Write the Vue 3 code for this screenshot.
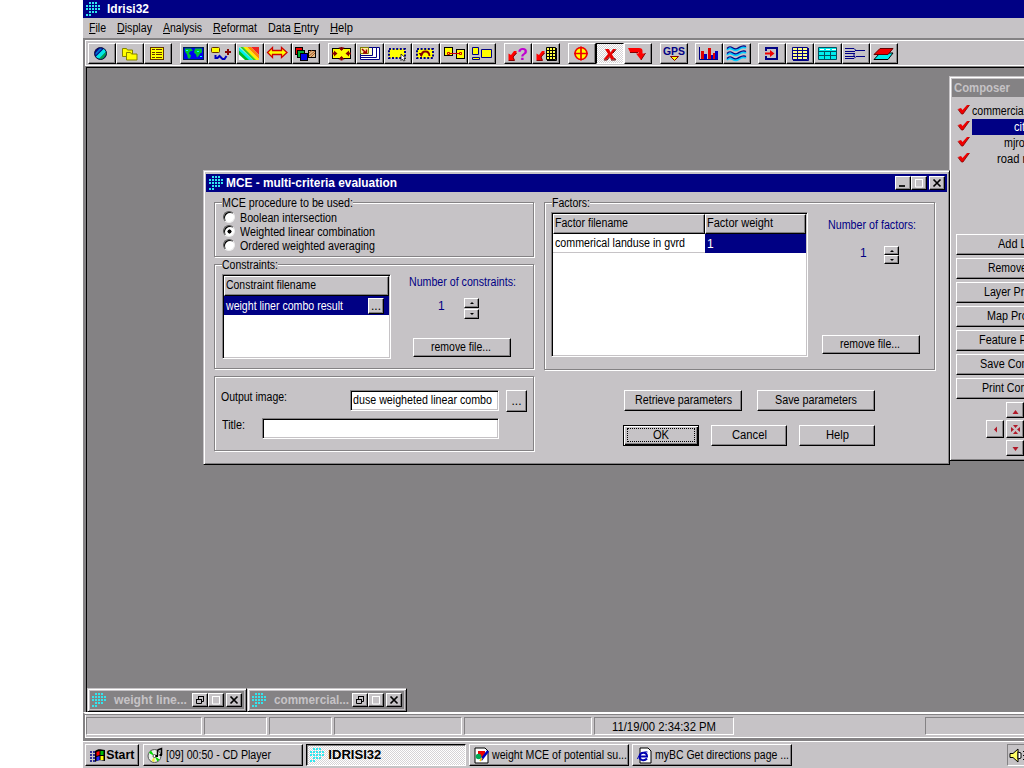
<script setup>
import { ref } from 'vue'

// narrows the letters so a label takes the width the old 8pt bitmap font gives it
const vFit = {
    mounted(el, binding){
        const natural = el.getBoundingClientRect().width;
        el.style.width = binding.value + 'px';
        el.style.transform = 'scaleX(' + binding.value / natural + ')';
    }
}

const menus = [
    { before: '', key: 'F', after: 'ile', width: 17 },
    { before: '', key: 'D', after: 'isplay', width: 35 },
    { before: '', key: 'A', after: 'nalysis', width: 39 },
    { before: '', key: 'R', after: 'eformat', width: 44 },
    { before: 'Data ', key: 'E', after: 'ntry', width: 51 },
    { before: '', key: 'H', after: 'elp', width: 23 },
]

const redArrow = '<path d="M10 7h2.500v2.500L9 13l1.500 3H4.500V9.500L7 11z" fill="#f00"/><path d="M12.500 9L9 13l1.500 3.500H4.500" fill="none" stroke="#840000"/>'
const dashes = '<rect x="5" y="5" width="16" height="9" fill="#ff0" stroke="#000084" stroke-width="2" stroke-dasharray="2 1.6"/>'

// drawn in button coordinates, 28 x 20
const toolGroups = [
    [
        { svg: '<circle cx="12.5" cy="9.5" r="6" fill="#000084"/><path d="M7.500 13l8.500-8.500 2.500 3-7 7.500z" fill="#00e7e7"/><path d="M10.500 15.300l8-8v3l-4 5z" fill="#00a050"/><path d="M7.500 9l4-4.500h3l-7 7z" fill="#0070d0"/><circle cx="12.500" cy="9.500" r="6" fill="none" stroke="#101040"/>' },
        { svg: '<path d="M6.500 4.500h4l1 1.500h5v6.500H6.500z" fill="#ff0" stroke="#848200"/><path d="M10.500 8.500h4l1 1.500h5.500v6H10.500z" fill="#ff0" stroke="#848200"/>' },
        { svg: '<rect x="6.500" y="3.500" width="13" height="12" fill="#ff0" stroke="#633000"/><path d="M8 5.500h3m1 0h6M8 8.500h3m1 0h6M8 10.500h3m1 0h6M8 13.500h3m1 0h6" stroke="#633000"/>' },
    ],
    [
        { svg: '<rect x="3.500" y="3.500" width="20" height="12" fill="#0000f0" stroke="#002050"/><path d="M5 4.500h6l2 2-3 1-1 2 2 2-1 3H8l-1-4-2-3zM15 4.500h7v4l-2 1-1 2-2 2-1-3-2-2z" fill="#00c030"/><path d="M6 6h2v1h-2zM17 7h2v1h-2zM20 12h2v1h-2z" fill="#0ff"/>' },
        { svg: '<rect x="3.500" y="3.500" width="8" height="5" rx="1" fill="#ff0" stroke="#633000"/><path d="M20 5v6M17 8h6" stroke="#840000" stroke-width="2"/><path d="M7.500 11v3h2l2-2 3 3h2l2-3" fill="none" stroke="#0000c0" stroke-width="2"/>' },
        { svg: '<rect x="3" y="3" width="20" height="13" fill="#fff"/><path d="M3 5.500l11 10.500h-5l-6-5.500z" fill="#0b2"/><path d="M3 3l14 13h-4L3 6.500z" fill="#0ee"/><path d="M4 3h4l13 13h-4z" fill="#3c3"/><path d="M7 3h4l12 12v1h-3z" fill="#fe0"/><path d="M11 3h4l8 8v4z" fill="#f80"/><path d="M15 3h8v8z" fill="#e22"/>' },
        { svg: '<path d="M3.500 8.500l5-5v3h9v-3l5.500 5-5.500 5v-3h-9v3z" fill="#ff0" stroke="#d00000" stroke-width="1.300"/>' },
        { svg: '<rect x="3.500" y="3.500" width="7" height="7" fill="#e00" stroke="#000"/><rect x="5.500" y="6.500" width="7" height="7" fill="#0a3" stroke="#000"/><rect x="8.500" y="9.500" width="7" height="7" fill="#00e" stroke="#000"/><rect x="16.500" y="6.500" width="7" height="7" fill="#db8" stroke="#000"/><path d="M17 9l3-2.500M17 12l6-5M19 13l4-4" stroke="#a52"/>' },
    ],
    [
        { svg: '<rect x="4.500" y="4.500" width="18" height="10" fill="#ff0" stroke="#000"/><path d="M13.500 7l3-3.500h-6zM13.500 12l3 3.500h-6zM9.500 9.500L6 6.500v6zM17.500 9.500L21 6.500v6z" fill="#840000"/><path d="M13.500 3v3M13.500 13v3.500M4 9.500h4M19 9.500h4" stroke="#840000" stroke-width="2"/>' },
        { svg: '<path d="M4.500 3.500h19v12h-19z" fill="#fff" stroke="#000084"/><path d="M4.500 3.500h16v10h-16z" fill="#fff" stroke="#000084"/><path d="M4.500 3.500h12v8h-12z" fill="#ffc" stroke="#000084"/><path d="M4.500 3.500h8v6h-8z" fill="#fe9" stroke="#848200"/><path d="M6 5l4 4M10.500 5.500V9H7" fill="none" stroke="#a00000" stroke-width="1.500"/>' },
        { svg: dashes + '<path d="M17 10v6.500l1.500-1.500 1 2 1.500-.500-1-2h2z" fill="#fff" stroke="#000" stroke-width=".7"/>' },
        { svg: dashes + '<path d="M9 12c1-6 8-6 8.500 0" fill="none" stroke="#840000" stroke-width="1.800"/><path d="M6.500 9h5l-2 4z" fill="#840000"/>' },
        { svg: '<rect x="4.500" y="3.500" width="8" height="8" fill="#ff0" stroke="#000"/><rect x="16.500" y="5.500" width="8" height="9" fill="#ff0" stroke="#000"/><path d="M9 9.500h10" stroke="#d00000"/><path d="M7.500 8.500h2v2h-2zM19.500 8.500h2v2h-2z" fill="none" stroke="#d00000"/>' },
        { svg: '<path d="M4.500 3.500h6V10.500H4.500zM13.500 5.500h10v8h-10zM4.500 13.500h7V15.500h-7z" fill="#ff0" stroke="#000084"/>' },
    ],
    [
        { svg: redArrow + '<text x="13.500" y="16" font-size="17" font-weight="bold" fill="#c000d0">?</text>' },
        { svg: redArrow + '<path d="M14.500 3.500h9v12h-9z" fill="#ff4" stroke="#000"/><path d="M14 6.500h10M14 9.500h10M14 12.500h10M17.500 4v12M20.500 4v12" stroke="#000"/><path d="M24.500 4v12.500H15" stroke="#000" fill="none"/>' },
    ],
    [
        { svg: '<circle cx="13" cy="9.500" r="6" fill="#ff0" stroke="#f00000" stroke-width="1.600"/><path d="M13 2.500v14M6 9.500h14" stroke="#f00000" stroke-width="1.700"/>' },
        { down: true, svg: '<path d="M9 5h4l1.500 3.500L17 5h3l-4 5.500 3 5h-4l-1.500-3-3 3H7.500l4.500-5.500z" fill="#e80000"/><path d="M8 16h3l2.500-3M15 16h4.500l-1-2M17 9l3-3.500" stroke="#630000" fill="none"/>' },
        { svg: '<path d="M4 4h11c2.500 0 3.500 1 3.500 3v2.500H21L17 16l-5-6.500h2.500V8H6z" fill="#f00"/><path d="M21.500 9l-4.500 7M6 8.500h8" stroke="#840000"/>' },
    ],
    [
        { svg: '<text x="3" y="10.800" font-size="10.500" font-weight="bold" textLength="22" lengthAdjust="spacingAndGlyphs" fill="#000084">GPS</text><path d="M10.500 12.500h8l-4 4z" fill="#ff0" stroke="#840000"/>' },
    ],
    [
        { svg: '<path d="M4.500 3v12.500H23" stroke="#000084" fill="none"/><path d="M6 7h3v8H6zM13 4h3v11h-3zM18 9h2v6h-2z" fill="#e00000"/><path d="M9 10h3v5H9zM16 11h2v4h-2zM20 7h3v8h-3z" fill="#0000c0"/>' },
        { svg: '<g fill="none" stroke-width="2"><path d="M4 6c4-5 6 2 10 0s6-4 9-2M4 11c4-5 6 2 10 0s6-4 9-2M4 16c4-5 6 2 10 0s6-4 9-2" stroke="#0cf"/><path d="M4 4.500c4-5 6 2 10 0s6-4 9-2M4 9.500c4-5 6 2 10 0s6-4 9-2M4 14.500c4-5 6 2 10 0s6-4 9-2" stroke="#000084" stroke-width="1.300"/></g>' },
    ],
    [
        { svg: '<path d="M8 7V4h11v11H8v-3" fill="none" stroke="#000084" stroke-width="2"/><path d="M7 8.500h5V6l4.500 3.500-4.500 3.500v-2.500H7z" fill="#f00000"/>' },
        { svg: '<path d="M6.500 3.500h15v12h-15z" fill="#ff8" stroke="#000084"/><path d="M6 6.500h16M6 9.500h16M6 12.500h16M11.500 3v12M16.500 3v12" stroke="#000084"/><path d="M22.500 4v12.500H7" stroke="#000084" fill="none"/>' },
        { svg: '<path d="M4.500 3.500h18v12H4.500z" fill="#0ee" stroke="#005060"/><path d="M4 7.500h19M4 11.500h19M10.500 7.500v8M16.500 7.500v8" stroke="#005060"/><path d="M6 5.500h16" stroke="#fff" stroke-dasharray="4 2"/>' },
        { svg: '<path d="M3 4.500h9M3 7.500h10M3 9.500h10M3 12.500h10M3 14.500h9M13 6.500h10M14 12.500h9M12 4.500l2 2M12 14.500l2-2M12 9.500v3" stroke="#000084" fill="none"/>' },
        { svg: '<path d="M10 9h13l-5 6.500H4z" fill="#0ee" stroke="#000"/><path d="M10 4.500h13l-5 6H4z" fill="#f00000" stroke="#630000"/>' },
    ],
]

const logoDots = [
    [1, 0], [2, 0], [3, 0],
    [0, 1], [1, 1], [2, 1], [3, 1], [4, 1],
    [0, 2], [1, 2], [2, 2], [3, 2], [4, 2],
    [1, 3], [2, 3], [3, 3],
    [0, 4], [1, 4],
]

const procedures = [
    { label: 'Boolean intersection', width: 97 },
    { label: 'Weighted linear combination', width: 135 },
    { label: 'Ordered weighted averaging', width: 135 },
]
const procedure = ref(1)

const layers = [
    { name: 'commercial', indent: 0, width: 54 },
    { name: 'cities', indent: 42, width: 25 },
    { name: 'mjroads', indent: 32, width: 38 },
    { name: 'road net', indent: 25, width: 41 },
]
const selectedLayer = ref(1)

const composerButtons = [
    { label: 'Add Layer', indent: 41, width: 50 },
    { label: 'Remove Layer', indent: 31, width: 68 },
    { label: 'Layer Properties', indent: 27, width: 78 },
    { label: 'Map Properties', indent: 30, width: 73 },
    { label: 'Feature Properties', indent: 22, width: 90 },
    { label: 'Save Composition', indent: 23, width: 88 },
    { label: 'Print Composition', indent: 25, width: 84 },
]

const minimized = [
    { title: 'weight line...', width: 73 },
    { title: 'commercial...', width: 75 },
]

const statusPanels = ['', '', '', '', '', '11/19/00 2:34:32 PM']
</script>

<template>
    <div class="screen">
        <div class="titlebar main-title">
            <svg class="logo" viewBox="0 0 15 15"><rect v-for="d in logoDots" :x="d[0] * 3" :y="d[1] * 3" width="2" height="2" /></svg>
            <b v-fit="42">Idrisi32</b>
        </div>
        <div class="menubar">
            <span v-for="m in menus" v-fit="m.width" class="fit">{{ m.before }}<u>{{ m.key }}</u>{{ m.after }}</span>
        </div>
        <div class="toolbar">
            <div v-for="group in toolGroups" class="tool-group">
                <button v-for="tool in group" class="tool" :class="{ down: tool.down }">
                    <svg viewBox="1 0 26 19" v-html="tool.svg"></svg>
                </button>
            </div>
        </div>

        <div class="workspace">
            <div v-for="w in minimized" class="mini">
                <div class="mini-bar">
                    <svg class="logo" viewBox="0 0 15 15"><rect v-for="d in logoDots" :x="d[0] * 3" :y="d[1] * 3" width="2" height="2" /></svg>
                    <b v-fit="w.width">{{ w.title }}</b>
                    <span class="win-buttons">
                        <i class="wb"><svg viewBox="0 0 12 10"><path d="M4 1.500h6M4.500 2v2M9.500 1v5.500H8" /><path d="M2 4.500h6M2.500 4v4.500h5V4" /></svg></i>
                        <i class="wb off"><svg viewBox="0 0 12 10"><path d="M2 1.500h8M2.500 1v8h7V1" /></svg></i>
                        <i class="wb close"><svg viewBox="0 0 12 10"><path d="M2.500 1.500l7 7M9.500 1.500l-7 7" class="thick" /></svg></i>
                    </span>
                </div>
            </div>
        </div>

        <div class="statusbar">
            <div v-for="(p, i) in statusPanels" class="panel" :class="'p' + i"><span v-if="p" v-fit="104" class="fit">{{ p }}</span></div>
            <div class="panel last"></div>
        </div>

        <div class="taskbar">
            <button class="task start">
                <svg viewBox="0 0 17 15"><path d="M1 4h2M1 7h2M1 10h2M1 13h2M4 4h2M4 7h2M4 10h2M4 13h2" stroke="#000084" stroke-width="1.500" /><path d="M6 3c3-2 4-2 10-1v11c-5-1-7-1-10 1z" fill="#000" /><path d="M7.500 4l3-1v4l-3 1z" fill="#f00" /><path d="M11.500 3h3v4h-3z" fill="#0b0" /><path d="M7.500 9l3-1v4l-3 1z" fill="#22f" /><path d="M11.500 8h3v4h-3z" fill="#ff0" /></svg>
                <b v-fit="28">Start</b>
            </button>
            <button class="task">
                <svg viewBox="0 0 17 17"><circle cx="7.500" cy="9" r="6.500" fill="#e8f0e8" stroke="#555" /><path d="M7.500 9L2 6l2-2.500zM7.500 9l5 3.500-2 2z" fill="#0d0" /><path d="M7.500 9l-3 5 3 1.200z" fill="#ee3" /><circle cx="7.500" cy="9" r="1.500" fill="#fff" stroke="#555" /><path d="M10.500 3l4-1.500v6.500M10.500 3v6" stroke="#000" stroke-width="1.500" fill="none" /><path d="M8.500 8h2.500v2H8.500zM12.500 7H15v2h-2.500z" /></svg>
                <span v-fit="105" class="fit">[09] 00:50 - CD Player</span>
            </button>
            <button class="task active">
                <svg class="logo" viewBox="0 0 15 15"><rect v-for="d in logoDots" :x="d[0] * 3" :y="d[1] * 3" width="2" height="2" /></svg>
                <b v-fit="53">IDRISI32</b>
            </button>
            <button class="task">
                <svg viewBox="0 0 17 17"><path d="M2 1h10l3 3v12H2z" fill="#fff" stroke="#000" /><path d="M5 4h7v6H5z" fill="#e00" /><circle cx="5.500" cy="9.500" r="2.800" fill="#0a5" /><path d="M8 13l7-9" stroke="#0000c0" stroke-width="2.500" /><path d="M7 14l2-3" stroke="#fc0" stroke-width="1.500" /></svg>
                <span v-fit="135" class="fit">weight MCE of potential su...</span>
            </button>
            <button class="task">
                <svg viewBox="0 0 17 17"><path d="M4 1h8l3 3v12H4z" fill="#fff" stroke="#000" /><path d="M3.500 9.500h7.500c0-5-7-5-7.500 0 0 4 5 5 7.500 2" fill="none" stroke="#0000b0" stroke-width="2" /><path d="M1.500 12c1-4 6-8 10-7" fill="none" stroke="#0000b0" /></svg>
                <span v-fit="134" class="fit">myBC Get directions page ...</span>
            </button>
            <div class="tray">
                <svg viewBox="0 0 17 17"><path d="M1 6.500h3L9 2v13l-5-4.500H1z" fill="#ff6" stroke="#000" /><path d="M9 5l3 1v5l-3 1z" fill="#fff" stroke="#000" /><path d="M14 5l2-2M14 8.500h2M14 12l2 2" stroke="#000" /></svg>
            </div>
        </div>

        <div class="composer">
            <div class="composer-title"><b v-fit="56">Composer</b></div>
            <div class="layers">
                <div v-for="(layer, i) in layers" class="layer" :class="{ selected: i === selectedLayer }" @click="selectedLayer = i">
                    <svg viewBox="0 0 13 12"><path d="M1 5l3-1 1.500 2L10 1h2.500L6 10H4.500z" fill="#f00000" /><path d="M12.500 1L6 10H4.500L1 5.500" fill="none" stroke="#840000" stroke-width=".8" /></svg>
                    <span class="layer-name" :style="{ paddingLeft: layer.indent + 'px' }"><span v-fit="layer.width" class="fit">{{ layer.name }}</span></span>
                </div>
            </div>
            <div class="composer-buttons">
                <button v-for="b in composerButtons" class="btn" :style="{ paddingLeft: b.indent + 'px' }"><span v-fit="b.width" class="fit">{{ b.label }}</span></button>
            </div>
            <div class="pan">
                <button class="btn up"><svg viewBox="0 0 9 9"><path d="M4.500 4l3 4h-6z" /></svg></button>
                <button class="btn left"><svg viewBox="0 0 9 9"><path d="M6 1.500v6l-3-3z" /></svg></button>
                <button class="btn mid"><svg viewBox="0 0 9 9"><path d="M0 2v5l3-2.500zM9 2v5L6 4.500zM2 0h5L4.500 3zM2 9h5L4.500 6z" /></svg></button>
                <button class="btn bottom"><svg viewBox="0 0 9 9"><path d="M1.500 3h6l-3 4z" /></svg></button>
            </div>
        </div>

        <div class="dialog">
            <div class="titlebar">
                <svg class="logo" viewBox="0 0 15 15"><rect v-for="d in logoDots" :x="d[0] * 3" :y="d[1] * 3" width="2" height="2" /></svg>
                <b v-fit="171">MCE - multi-criteria evaluation</b>
                <span class="win-buttons">
                    <i class="wb"><svg viewBox="0 0 12 10"><path d="M2 8h6" class="thick" /></svg></i>
                    <i class="wb off"><svg viewBox="0 0 12 10"><path d="M2 1.500h8M2.500 1v8h7V1" /></svg></i>
                    <i class="wb close"><svg viewBox="0 0 12 10"><path d="M2.500 1.500l7 7M9.500 1.500l-7 7" class="thick" /></svg></i>
                </span>
            </div>
            <div class="dialog-body">
                <div class="col-left">
                    <section class="group procedure">
                        <h2><span v-fit="131" class="fit">MCE procedure to be used:</span></h2>
                        <label v-for="(p, i) in procedures" class="radio" @click="procedure = i">
                            <i class="dot" :class="{ checked: i === procedure }"></i>
                            <span v-fit="p.width" class="fit">{{ p.label }}</span>
                        </label>
                    </section>
                    <section class="group constraints">
                        <h2><span v-fit="56" class="fit">Constraints:</span></h2>
                        <div class="grid grid-c">
                            <div class="cell head"><span v-fit="90" class="fit">Constraint filename</span></div>
                            <div class="cell sel"><span v-fit="117" class="fit">weight liner combo result</span><button class="btn dots">...</button></div>
                        </div>
                        <div class="count">
                            <span v-fit="107" class="fit">Number of constraints:</span>
                            <div class="spin"><span>1</span><div class="spinner"><i class="s-up"></i><i class="s-down"></i></div></div>
                            <button class="btn remove"><span v-fit="60" class="fit">remove file...</span></button>
                        </div>
                    </section>
                    <section class="group output">
                        <div class="field">
                            <span v-fit="66" class="fit">Output image:</span>
                            <div class="input short"><span v-fit="139" class="fit">duse weigheted linear combo</span></div>
                            <button class="btn browse">...</button>
                        </div>
                        <div class="field">
                            <span v-fit="23" class="fit title-label">Title:</span>
                            <div class="input long"></div>
                        </div>
                    </section>
                </div>
                <div class="col-right">
                    <section class="group factors">
                        <h2><span v-fit="38" class="fit">Factors:</span></h2>
                        <div class="grid grid-f">
                            <div class="cell head"><span v-fit="73" class="fit">Factor filename</span></div>
                            <div class="cell head"><span v-fit="66" class="fit">Factor weight</span></div>
                            <div class="cell plain"><span v-fit="130" class="fit">commerical landuse in gvrd</span></div>
                            <div class="cell sel">1</div>
                        </div>
                        <div class="count">
                            <span v-fit="88" class="fit">Number of factors:</span>
                            <div class="spin"><span>1</span><div class="spinner"><i class="s-up"></i><i class="s-down"></i></div></div>
                            <button class="btn remove"><span v-fit="60" class="fit">remove file...</span></button>
                        </div>
                    </section>
                    <div class="actions params">
                        <button class="btn"><span v-fit="97" class="fit">Retrieve parameters</span></button>
                        <button class="btn"><span v-fit="82" class="fit">Save parameters</span></button>
                    </div>
                    <div class="actions">
                        <button class="btn ok"><span class="focus"><span v-fit="16" class="fit">OK</span></span></button>
                        <button class="btn"><span v-fit="35" class="fit">Cancel</span></button>
                        <button class="btn"><span v-fit="23" class="fit">Help</span></button>
                    </div>
                </div>
            </div>
        </div>
    </div>
</template>

<style>
body {
    background-color: #fff;
    overflow: hidden;
}
</style>

<style scoped>
.screen, .screen *{
    box-sizing: border-box;
}
.screen{
    position: relative;
    width: 1024px;
    height: 768px;
    padding-left: 83px;
    overflow: hidden;
    display: flex;
    flex-direction: column;
    font: 12px/14px "Liberation Sans", Arial, sans-serif;
    color: #000;
    background: #fff;
}
button{
    font: inherit;
    color: inherit;
    padding: 0;
    margin: 0;
}
b, .fit{
    display: inline-block;
    white-space: pre;
    flex: none;
    transform-origin: 0 0;
}
svg{
    display: block;
    flex: none;
}
.logo{
    width: 15px;
    height: 15px;
    fill: #31e7ef;
    shape-rendering: crispEdges;
}
u{
    text-underline-offset: 1px;
}

/* title bars */
.titlebar{
    display: flex;
    align-items: center;
    height: 18px;
    padding-left: 3px;
    background: #000084;
    color: #fff;
    flex: none;
}
.titlebar .logo{
    margin-top: 1px;
}
.titlebar b{
    margin-left: 2px;
}
.main-title b{
    margin-left: 6px;
}
.win-buttons{
    display: flex;
    margin-left: auto;
}
.wb{
    width: 16px;
    height: 14px;
    padding: 1px;
    background: #c6c3c6;
    border: 1px solid;
    border-color: #fff #000 #000 #fff;
    box-shadow: inset -1px -1px #848284;
}
.wb svg{
    width: 12px;
    height: 10px;
    fill: none;
    stroke: #000;
}
.wb .thick{
    stroke-width: 1.7;
}
.wb.off svg{
    stroke: #fff;
}
.wb.close{
    margin-left: 2px;
}

/* menu and tools */
.menubar{
    display: flex;
    gap: 11px;
    height: 22px;
    padding: 3px 0 0 6px;
    background: #c6c3c6;
    border-bottom: 2px solid #848284;
    flex: none;
}
.toolbar{
    display: flex;
    height: 26px;
    margin-left: 2px;
    padding: 2px 0 0 2px;
    background: #c6c3c6;
    border: solid #fff;
    border-width: 1px 0 1px 1px;
    outline: 2px solid #848284;
    flex: none;
}
.tool-group{
    display: flex;
    margin-right: 8px;
}
.tool-group:nth-child(n+6){
    margin-right: 7px;
}
.tool{
    width: 28px;
    height: 21px;
    background: #c6c3c6;
    border: 1px solid;
    border-color: #fff #000 #000 #fff;
    box-shadow: inset -1px -1px #848284;
}
.tool svg{
    width: 26px;
    height: 19px;
}
.tool.down{
    border-color: #000 #fff #fff #000;
    box-shadow: none;
    background: repeating-conic-gradient(#fff 0 25%, #d6d3d6 0 50%) 0 0 / 2px 2px;
}

/* workspace with minimized maps */
.workspace{
    display: flex;
    align-items: flex-end;
    height: 646px;
    background: #848284;
    border-left: 3px solid #848284;
    border-top: 1px solid #848284;
    box-shadow: inset 1px 1px #000;
    padding-left: 1px;
    flex: none;
}
.mini{
    width: 160px;
    height: 24px;
    padding: 2px;
    background: #c6c3c6;
    border: 1px solid;
    border-color: #c6c3c6 #000 #000 #c6c3c6;
    box-shadow: inset 1px 1px #fff, inset -1px -1px #848284;
}
.mini-bar{
    display: flex;
    align-items: center;
    height: 18px;
    padding: 0 2px;
    background: #848284;
    color: #c6c3c6;
}
.mini-bar .logo{
    margin-top: 1px;
}
.mini-bar b{
    margin-left: 7px;
}

/* status bar */
.statusbar{
    display: flex;
    height: 29px;
    padding: 3px 0 0 1px;
    background: #c6c3c6;
    border-left: 2px solid #848284;
    border-top: 2px solid #fff;
    border-bottom: 3px solid #848284;
    box-shadow: inset 0 1px #848284, inset 1px 0 #fff, inset 0 -1px #fff;
    flex: none;
}
.panel{
    height: 18px;
    margin-right: 2px;
    padding: 2px 0 0 17px;
    border: 1px solid;
    border-color: #848284 #fff #fff #848284;
    flex: none;
}
.p0{
    width: 116px;
}
.p1, .p2{
    width: 63px;
}
.p3, .p4{
    width: 128px;
}
.p5{
    width: 140px;
}
.last{
    width: 109px;
    margin: 0 -10px 0 auto;
}

/* taskbar */
.taskbar{
    display: flex;
    gap: 3px;
    height: 27px;
    padding: 2px 0 0 2px;
    background: #c6c3c6;
    border-top: 1px solid #fff;
    flex: none;
}
.task{
    display: flex;
    align-items: center;
    gap: 2px;
    width: 160px;
    height: 22px;
    padding-left: 3px;
    background: #c6c3c6;
    border: 1px solid;
    border-color: #fff #000 #000 #fff;
    box-shadow: inset -1px -1px #848284;
    overflow: hidden;
}
.task svg{
    width: 17px;
    height: 17px;
}
.task.start{
    width: 54px;
    gap: 0;
    margin-right: 1px;
}
.task .logo{
    width: 15px;
    height: 15px;
    margin-top: 1px;
}
.task.active{
    gap: 1px;
    border-color: #000 #fff #fff #000;
    box-shadow: inset 1px 1px #848284;
    background: repeating-conic-gradient(#fff 0 25%, #d6d3d6 0 50%) 0 0 / 2px 2px;
}
.tray{
    width: 34px;
    height: 22px;
    margin: 0 -17px 0 auto;
    padding: 2px 1px;
    border: 1px solid;
    border-color: #848284 #fff #fff #848284;
}
.tray svg{
    width: 17px;
    height: 17px;
}

/* composer window, runs off the right edge */
.composer{
    position: absolute;
    left: 949px;
    top: 76px;
    width: 150px;
    height: 385px;
    padding: 2px;
    background: #c6c3c6;
    border: 1px solid;
    border-color: #c6c3c6 #000 #000 #c6c3c6;
    box-shadow: inset 1px 1px #fff, inset -1px -1px #848284;
}
.composer-title{
    height: 18px;
    padding: 2px 0 0 2px;
    background: #848284;
    color: #c6c3c6;
}
.layers{
    padding-top: 6px;
    height: 137px;
}
.layer{
    display: flex;
    align-items: center;
    height: 16px;
    padding-left: 5px;
}
.layer svg{
    width: 13px;
    height: 12px;
    margin-right: 2px;
    margin-top: -2px;
}
.layer-name{
    flex: 1;
    height: 16px;
    padding-top: 1px;
}
.selected .layer-name{
    background: #000084;
    color: #fff;
}
.composer-buttons{
    display: flex;
    flex-direction: column;
    gap: 3px;
    padding: 0 4px;
}
.composer-buttons .btn{
    height: 21px;
    padding-bottom: 1px;
    justify-content: flex-start;
}
.pan{
    display: grid;
    grid-template-columns: 18px 18px;
    grid-template-rows: 16px 18px 16px;
    gap: 2px;
    padding: 3px 0 0 34px;
}
.pan svg{
    width: 9px;
    height: 9px;
    fill: #b01828;
}
.up, .bottom{
    grid-column: 2;
}

/* buttons */
.btn{
    display: flex;
    align-items: center;
    justify-content: center;
    background: #c6c3c6;
    border: 1px solid;
    border-color: #fff #000 #000 #fff;
    box-shadow: inset -1px -1px #848284;
}

/* MCE dialog */
.dialog{
    position: absolute;
    left: 203px;
    top: 170px;
    width: 747px;
    height: 295px;
    padding: 3px 2px 2px;
    background: #c6c3c6;
    border: 1px solid;
    border-color: #c6c3c6 #000 #000 #c6c3c6;
    box-shadow: inset 1px 1px #fff, inset -1px -1px #848284;
}
.dialog .win-buttons{
    margin-right: 2px;
}
.dialog-body{
    display: flex;
    gap: 10px;
    padding: 10px 0 0 8px;
}
.group{
    position: relative;
    border: 1px solid #848284;
    box-shadow: 1px 1px #fff, inset 1px 1px #fff;
}
.group h2{
    position: absolute;
    top: -7px;
    left: 7px;
    margin: 0;
    font: inherit;
    background: #c6c3c6;
    height: 14px;
}
.col-left{
    display: flex;
    flex-direction: column;
    gap: 7px;
    width: 320px;
}
.procedure{
    height: 55px;
    padding: 8px 0 0 8px;
}
.radio{
    display: flex;
    align-items: center;
    gap: 5px;
    height: 14px;
}
.dot{
    width: 12px;
    height: 12px;
    margin-top: -2px;
    border-radius: 50%;
    background: #fff;
    border: 1px solid;
    border-color: #555 #eee #eee #555;
    box-shadow: inset 1px 1px #000;
}
.dot.checked{
    background: radial-gradient(circle at 5.500px 5.500px, #000 0 1.800px, #fff 2.300px);
}
.constraints{
    display: flex;
    height: 105px;
    padding: 9px 0 0 7px;
}
.grid{
    display: grid;
    align-content: start;
    background: #fff;
    border: 1px solid;
    border-color: #848284 #fff #fff #848284;
    box-shadow: inset 1px 1px #000, inset -1px -1px #c6c3c6;
    padding: 1px;
}
.grid-c{
    width: 169px;
    height: 85px;
    grid-template-columns: 165px;
}
.cell{
    display: flex;
    align-items: center;
    height: 19px;
    padding-left: 2px;
}
.head{
    background: #c6c3c6;
    border: 1px solid;
    border-color: #fff #000 #000 #fff;
    box-shadow: inset -1px -1px #848284;
    padding: 0 0 2px 1px;
    height: 20px;
}
.plain{
    border-bottom: 1px solid #c6c3c6;
}
.sel{
    background: #000084;
    color: #fff;
}
.dots{
    width: 16px;
    height: 16px;
    margin: 0 5px 0 auto;
    color: #000;
    line-height: 8px;
}
.count{
    display: flex;
    flex-direction: column;
    color: #000084;
}
.count .btn{
    color: #000;
}
.constraints .count{
    margin-left: 18px;
    padding-top: 1px;
}
.spin{
    display: flex;
    align-items: flex-start;
}
.constraints .spin{
    padding: 9px 0 0 29px;
    height: 49px;
    gap: 19px;
}
.constraints .spin span{
    padding-top: 1px;
}
.spinner{
    display: flex;
    flex-direction: column;
    gap: 1px;
}
.spinner i{
    width: 15px;
    height: 10px;
    background: #c6c3c6;
    border: 1px solid;
    border-color: #fff #000 #000 #fff;
    box-shadow: inset -1px -1px #848284;
    padding: 3px 0 0 5px;
}
.spinner i::after{
    content: "";
    display: block;
    width: 0;
    border: solid transparent;
    border-width: 0 2px 2px;
    border-bottom-color: #000;
}
.spinner .s-down::after{
    border-width: 2px 2px 0;
    border-top-color: #000;
}
.remove{
    width: 98px;
    height: 19px;
    padding: 0 2px 1px 0;
}
.constraints .remove{
    margin-left: 4px;
}
.output{
    height: 75px;
    padding: 13px 0 0 6px;
}
.field{
    display: flex;
    height: 28px;
}
.title-label{
    margin-left: 1px;
}
.input{
    height: 21px;
    padding: 2px;
    background: #fff;
    border: 1px solid;
    border-color: #848284 #fff #fff #848284;
    box-shadow: inset 1px 1px #000, inset -1px -1px #c6c3c6;
}
.short{
    width: 149px;
    margin-left: auto;
}
.long{
    width: 237px;
    margin-left: auto;
    margin-right: 34px;
}
.browse{
    width: 21px;
    height: 22px;
    margin: 0 6px 0 7px;
}
.col-right{
    width: 391px;
}
.factors{
    display: flex;
    height: 168px;
    padding: 9px 0 0 6px;
}
.grid-f{
    width: 257px;
    height: 145px;
    grid-template-columns: 152px 101px;
}
.factors .count{
    margin-left: 14px;
    padding-top: 6px;
}
.factors .count > .fit{
    margin-left: 6px;
    align-self: flex-start;
}
.factors .spin{
    padding: 14px 0 0 38px;
    height: 103px;
    gap: 17px;
}
.factors .spinner{
    gap: 0;
}
.factors .spinner i{
    height: 9px;
}
.actions{
    display: flex;
    gap: 12px;
    padding: 14px 0 0 79px;
}
.actions .btn{
    width: 76px;
    height: 21px;
    padding-bottom: 1px;
}
.params{
    gap: 15px;
    padding: 20px 0 0 80px;
}
.params .btn{
    width: 118px;
}
.actions .ok{
    border-color: #000;
    box-shadow: inset 1px 1px #fff, inset -1px -1px #000, inset -2px -2px #848284;
}
.focus{
    display: flex;
    align-items: center;
    justify-content: center;
    width: 68px;
    height: 14px;
    border: 1px dotted #000;
}
</style>
